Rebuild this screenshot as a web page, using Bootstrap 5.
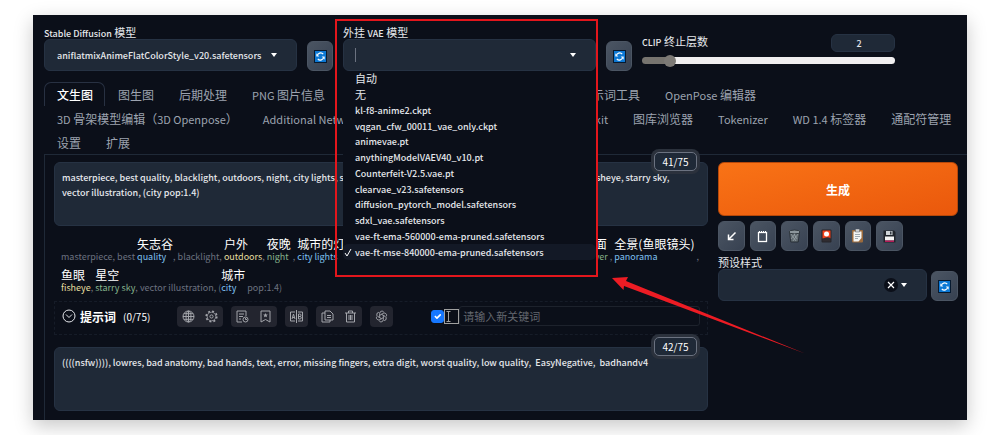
<!DOCTYPE html>
<html lang="zh-CN" data-bs-theme="dark">
<head>
<meta charset="utf-8">
<meta name="viewport" content="width=device-width, initial-scale=1">
<title>Stable Diffusion</title>
<link href="https://cdn.jsdelivr.net/npm/bootstrap@5.3.0/dist/css/bootstrap.min.css" rel="stylesheet">
<script src="https://cdn.jsdelivr.net/npm/bootstrap@5.3.0/dist/js/bootstrap.bundle.min.js" defer></script>
<style>
  body { background: #fff; color: #e5e7eb; font-family: "Noto Sans CJK SC", sans-serif; font-size: 11px; line-height: 15px; padding: 15px 33px; }
  .app { background: #0b0f19; padding: 10px 0 0 11px; box-shadow: 0 6px 18px rgba(0,0,0,.22); overflow: hidden; }
  .field { background-color: #1f2937; border: 1px solid #263243; border-radius: 6px; color: #e5e7eb; font-size: 9px; font-weight: 500; line-height: 15px; }
  .form-select.field { height: 32px; padding: 0 12px;
    background-image: url("data:image/svg+xml,%3Csvg xmlns='http://www.w3.org/2000/svg' viewBox='0 0 6 4'%3E%3Cpath d='M0 0h6L3 4z' fill='%23fff'/%3E%3C/svg%3E");
    background-size: 6px 4px; background-position: right 19px center; background-repeat: no-repeat; }
  .top-grid { display: grid; grid-template-columns: minmax(0,1fr) 26px minmax(0,1fr) 26px minmax(0,1fr); column-gap: 10px; padding-right: 72px; align-items: end; }
  .lbl { display: block; height: 14px; line-height: 14px; font-size: 11px; color: #e5e7eb; white-space: nowrap; margin: 0; }
  .lbl span { font-size: 9px; font-weight: 500; }
  .tool-btn { display: flex; align-items: center; justify-content: center; height: 30px; padding: 0; border: 1px solid #4b5563; border-radius: 6px; background: linear-gradient(135deg,#4b5563,#374151); color: #fff; }
  .preset-refresh { width: 27px; }
  .vae-slot { position: relative; }
  .vae-caret { position: absolute; left: 12px; top: 23px; width: 1px; height: 14px; background: #6b7280; }
  .vae-frame { position: absolute; z-index: 5; top: -6px; left: -8px; right: -2px; height: 258px; border: 2px solid #e3161c; pointer-events: none; }
  .vae-menu { position: absolute; z-index: 4; top: 46px; left: 0; right: 0; height: 189px; display: grid; grid-auto-rows: 1fr; margin: 0; padding: 0; list-style: none; background: #0b0f19; font-size: 9px; font-weight: 500; }
  .vae-menu li { display: flex; align-items: center; padding-left: 12px; position: relative; white-space: nowrap; }
  .vae-menu .zh { font-size: 11px; font-weight: 400; }
  .vae-menu .picked { background: #131926; border-radius: 5px; }
  .picked svg { position: absolute; left: 1px; }
  .pointer { position: absolute; z-index: 6; left: 100%; top: 252px; margin-left: 16px; pointer-events: none; }
  .num { width: 64px; height: 18px; text-align: center; padding: 0 8px 0 0; }
  .clip-range { display: block; appearance: none; width: 100%; height: 7px; margin: 5px 0 7px; border-radius: 4px; background: linear-gradient(90deg,#77746f 0 10%,#f1eff0 10%); }
  .clip-range::-webkit-slider-thumb { appearance: none; width: 12px; height: 12px; border-radius: 50%; background: #7d7a76; }
  .tabs { margin-top: 11px; font-size: 12px; }
  .tabs button { height: 24px; padding: 0 11px 0 12px; border: 1px solid transparent; border-bottom: 0; background: none; color: #9ca3af; line-height: 24px; white-space: nowrap; font-size: 12px; }
  .tabs button span { font-size: 11px; }
  .tabs button.active { color: #fff; border-color: #283142; border-radius: 7px 7px 0 0; font-weight: 500; }
  .tabs .skip-a { margin-left: 230px; }
  .tabs .skip-b { margin-left: 146px; }
  .panel { display: grid; grid-template-columns: minmax(0,654fr) minmax(0,240fr); column-gap: 10px; border: 1px solid #1f2937; border-width: 1px 0 0 1px; padding: 7px 9px 9px 9px; }
  .prompt { display: block; width: 100%; height: 64px; resize: none; padding: 7px; white-space: pre; overflow: hidden; }
  .prompt-box { position: relative; }
  .count { position: absolute; right: 11px; top: -10px; z-index: 2; min-width: 43px; height: 19px; border: 1px solid #6b7280; border-radius: 5px; background: #1f2937; box-shadow: 0 0 0 3px #2b313c; text-align: center; line-height: 17px; font-size: 10px; color: #fff; }
  .count.neg { top: -6px; }
  .glossed { padding: 6px 7px 0 7px; font-size: 9px; color: #6b7280; }
  .gloss-line { display: flex; height: 31px; align-items: flex-end; white-space: pre; line-height: 13px; }
  .gl { display: inline-flex; flex-direction: column; }
  .gl b { font-size: 12px; line-height: 13px; font-weight: 400; color: #fff; }
  .blue { color: #7ec0f0; } .yel { color: #e6dfa0; } .grn { color: #86b38b; }
  .keybar { margin-top: 7px; height: 34px; border: 1px dashed #161c28; padding: 0 7px 4px; display: flex; align-items: center; }
  .key-title { font-size: 12px; font-weight: 700; color: #fff; }
  .key-count { font-size: 10px; color: #fff; margin: 0 27px 0 7px; }
  .tools { display: flex; height: 21px; border-radius: 4px; background: #23252f; }
  .tools button { width: 23px; padding: 0; border: 0; background: none; color: #a3a5ab; display: flex; align-items: center; justify-content: center; }
  .tools svg, .chev { fill: none; stroke: currentColor; stroke-width: 1; }
  .form-check-input.key-check { width: 13px; height: 13px; margin: 0 0 0 38px; border-radius: 3px; flex: none; }
  .form-check-input.key-check:checked { background-color: #1677ff; border-color: #1677ff; }
  .key-input { flex: 1; min-width: 0; height: 20px; margin: 0; padding: 0 3px; border: 1px solid #1d222c; border-radius: 3px; background: transparent; font-size: 11px; color: #fff; }
  .key-input::placeholder { color: #63676f; }
  .generate { height: 54px; border: 1px solid #b6480a; border-radius: 6px; background: linear-gradient(to bottom right,#f97316,#ea580c); color: #fff; font-size: 12px; font-weight: 700; width: 100%; }
  .six { display: grid; grid-template-columns: repeat(6,minmax(0,1fr)); column-gap: 5px; max-width: 185px; margin-top: 5px; }
  .clear { position: absolute; right: 29px; top: 9px; width: 14px; height: 14px; border: 0; border-radius: 50%; background: #0b0f19; padding: 0; color: #fff; display: flex; align-items: center; justify-content: center; }
</style>
</head>
<body>
<svg width="0" height="0" class="position-absolute" aria-hidden="true">
  <symbol id="refresh" viewBox="0 0 13 13"><rect width="13" height="13" fill="#071a30"/><rect x="1" y="1" width="11" height="11" fill="#0c78d4"/><path d="M3.300 6a3.300 3.300 0 0 1 5.900-1.800M9.700 7a3.300 3.300 0 0 1-5.900 1.800" fill="none" stroke="#fff" stroke-width="1.200"/><path d="M2.300 3.300v3.300h3zM10.700 9.700V6.400h-3z" fill="#e9f4ff"/></symbol>
</svg>
<main class="app">
  <div class="top-grid">
    <div>
      <label class="lbl" for="model"><span>Stable Diffusion</span> 模型</label>
      <select id="model" class="form-select field"><option>aniflatmixAnimeFlatColorStyle_v20.safetensors</option></select>
    </div>
    <button class="tool-btn" aria-label="刷新模型"><svg width="13" height="13"><use href="#refresh"/></svg></button>
    <div class="vae-slot">
      <label class="lbl" for="vae">外挂 <span>VAE</span> 模型</label>
      <select id="vae" class="form-select field"><option></option></select>
      <i class="vae-caret"></i>
      <ul class="vae-menu">
        <li class="zh">自动</li><li class="zh">无</li><li>kl-f8-anime2.ckpt</li><li>vqgan_cfw_00011_vae_only.ckpt</li><li>animevae.pt</li><li>anythingModelVAEV40_v10.pt</li><li>Counterfeit-V2.5.vae.pt</li><li>clearvae_v23.safetensors</li><li>diffusion_pytorch_model.safetensors</li><li>sdxl_vae.safetensors</li><li>vae-ft-ema-560000-ema-pruned.safetensors</li>
        <li class="picked"><svg width="8" height="9" viewBox="0 0 8 9" fill="none" stroke="#fff"><path d="M1 5l2 3L7 1"/></svg>vae-ft-mse-840000-ema-pruned.safetensors</li>
      </ul>
      <div class="vae-frame"></div>
      <svg class="pointer" width="194" height="77" viewBox="612 277 194 77"><path d="M612 278l16-1-2 4L805 353.500 624 286l-.5 4z" fill="#ed1c24"/></svg>
    </div>
    <button class="tool-btn" aria-label="刷新 VAE"><svg width="13" height="13"><use href="#refresh"/></svg></button>
    <div>
      <div class="d-flex justify-content-between align-items-start"><label class="lbl" for="clip"><span>CLIP</span> 终止层数</label><input class="field num" value="2" aria-label="数值"></div>
      <input id="clip" class="clip-range" type="range" min="1" max="12" value="2">
    </div>
  </div>

  <nav class="tabs">
    <div class="d-flex"><button class="active">文生图</button><button>图生图</button><button>后期处理</button><button><span>PNG </span>图片信息</button><button class="skip-a">提示词工具</button><button><span>OpenPose </span>编辑器</button></div>
    <div class="d-flex"><button><span>3D </span>骨架模型编辑（<span>3D Openpose</span>）</button><button><span>Additional Networks</span></button><button class="skip-b"><span>Model Toolkit</span></button><button>图库浏览器</button><button><span>Tokenizer</span></button><button><span>WD 1.4 </span>标签器</button><button>通配符管理</button></div>
    <div class="d-flex"><button>设置</button><button>扩展</button></div>
  </nav>

  <section class="panel">
    <div>
      <div class="prompt-box"><span class="count">41/75</span>
<textarea class="field prompt" aria-label="提示词">masterpiece, best quality, blacklight, outdoors, night, city lights, sign, night market, upper body, portrait, cover, panorama, fisheye, starry sky,
vector illustration, (city pop:1.4)</textarea></div>
      <div class="glossed">
        <div class="gloss-line"><span>masterpiece, best </span><span class="gl blue"><b>矢志谷</b>quality</span><span>, blacklight, </span><span class="gl yel"><b>户外</b>outdoors</span><span>, </span><span class="gl grn"><b>夜晚</b>night</span><span> , </span><span class="gl blue"><b>城市的灯光</b>city lights</span><span class="ms-auto"></span><span class="gl grn"><b>封面</b> cover</span><span> , </span><span class="gl blue"><b>全景(鱼眼镜头)</b>panorama</span><span> , </span></div>
        <div class="gloss-line"><span class="gl yel"><b>鱼眼</b>fisheye</span><span>, </span><span class="gl grn"><b>星空</b>starry sky</span><span>, vector illustration, (</span><span class="gl blue"><b>城市</b>city</span><span> pop:1.4)</span></div>
      </div>
      <div class="keybar">
        <svg class="chev me-1" width="14" height="14" viewBox="0 0 14 14"><circle cx="7" cy="7" r="6"/><path d="M4 5.500l3 3 3-3"/></svg>
        <span class="key-title">提示词</span><span class="key-count">(0/75)</span>
        <div class="tools">
          <button aria-label="语言"><svg width="13" height="13" viewBox="0 0 13 13"><circle cx="6.500" cy="6.500" r="5.500"/><ellipse cx="6.500" cy="6.500" rx="2.500" ry="5.500"/><path d="M1 6.500h11M6.500 1v11M2 3.700h9M2 9.300h9"/></svg></button>
          <button aria-label="设置"><svg width="13" height="13" viewBox="0 0 13 13"><circle cx="6.500" cy="6.500" r="5.300" stroke-width="1.600" stroke-dasharray="2 2.160"/><circle cx="6.500" cy="6.500" r="4.300" stroke-width=".8"/><circle cx="6.500" cy="6.500" r="1.600"/></svg></button>
        </div>
        <div class="tools ms-2">
          <button aria-label="历史"><svg width="13" height="13" viewBox="0 0 13 13"><path d="M10 6V1H1v11h5M3 4h5M3 6.500h4M3 9h2"/><circle cx="9.500" cy="9.500" r="2.500"/><path d="M9.500 8v1.500H11"/></svg></button>
          <button aria-label="收藏"><svg width="13" height="13" viewBox="0 0 13 13"><path d="M2 1h9v11L6.500 9.500 2 12z"/><path d="M6.500 3l.7 1.500 1.600.1-1.200 1.100.4 1.600-1.500-.9-1.500.9.400-1.600L4.200 4.600l1.600-.1z" fill="currentColor" stroke="none"/></svg></button>
        </div>
        <div class="tools ms-2">
          <button aria-label="翻译"><svg width="13" height="13" viewBox="0 0 13 13"><path d="M5 2H.5v9H5M8 2h4.500v9H8M6.500 0v13M2 9l1.500-5L5 9M2.500 7.500h2M8.500 4v5h1.500a1.200 1.200 0 0 0 0-2.500H8.500h1.300a1.200 1.200 0 0 0 0-2.500z"/></svg></button>
        </div>
        <div class="tools ms-2">
          <button aria-label="复制"><svg width="13" height="13" viewBox="0 0 13 13"><path d="M4 1h5l3 3v6H4zM4 3H1v9h8v-2M6 5.500h4M6 7.500h4"/></svg></button>
          <button aria-label="删除"><svg width="13" height="13" viewBox="0 0 13 13"><path d="M1 3h11M4.500 3V1h4v2M2.500 3v9h8V3M5 5v5M6.500 5v5M8 5v5"/></svg></button>
        </div>
        <div class="tools ms-2">
          <button aria-label="ChatGPT"><svg width="13" height="13" viewBox="0 0 24 24" stroke-width="1.600"><g id="petal"><path d="M8.500 14V6.500a4.300 4.300 0 0 1 7.800-2.500M8.500 10l6.700-3.900a4.300 4.300 0 0 1 6 5.400"/></g><use href="#petal" transform="rotate(60 12 12)"/><use href="#petal" transform="rotate(120 12 12)"/><use href="#petal" transform="rotate(180 12 12)"/><use href="#petal" transform="rotate(240 12 12)"/><use href="#petal" transform="rotate(300 12 12)"/></svg></button>
        </div>
        <input class="form-check-input key-check" type="checkbox" checked aria-label="启用">
        <svg class="flex-shrink-0" width="15" height="15" viewBox="0 0 15 15" fill="none" stroke="#a0a0a0"><rect x=".5" y=".5" width="14" height="14"/><path d="M2.500 2.500h4M4.500 2.500v10M2.500 12.500h4"/></svg>
        <input class="key-input" placeholder="请输入新关键词" aria-label="新关键词">
      </div>
      <div class="prompt-box mt-2 pt-1"><span class="count neg">42/75</span>
<textarea class="field prompt" aria-label="反向提示词">((((nsfw)))), lowres, bad anatomy, bad hands, text, error, missing fingers, extra digit, worst quality, low quality,  EasyNegative,  badhandv4</textarea></div>
    </div>
    <div>
      <button class="generate">生成</button>
      <div class="six">
        <button class="tool-btn" aria-label="读取"><svg width="13" height="13" viewBox="0 0 13 13" stroke="#fff" stroke-width="1.500" fill="none"><path d="M10.500 2.500L4 9M3.500 4.500V9.500H8.500"/></svg></button>
        <button class="tool-btn" aria-label="清空"><svg width="13" height="13" viewBox="0 0 13 13" stroke="#fff" fill="none"><rect x="2.500" y="2.500" width="8" height="9" stroke-width="1.300"/><path d="M3 1.500h8" stroke-dasharray="1 1"/></svg></button>
        <button class="tool-btn" aria-label="删除"><svg width="13" height="14" viewBox="0 0 13 14"><path d="M1.500 3h10l-1.300 10H2.800z" fill="#606a70" stroke="#1c2228" stroke-width=".7"/><ellipse cx="6.500" cy="3" rx="5.500" ry="1.900" fill="#8d979c" stroke="#20272c" stroke-width=".8"/><path d="M3 5l5 7M6 5l3 5M10 5l-5 7M7 5l-4 5" stroke="#a8b2b6" stroke-width=".6"/></svg></button>
        <button class="tool-btn" aria-label="附加网络"><svg width="13" height="14" viewBox="0 0 13 14"><rect x="1.500" y=".5" width="10" height="13" rx="1" fill="#25252a"/><path d="M2.500 1.500h8v8h-8z" fill="#f4431c"/><circle cx="6.500" cy="5" r="2.500" fill="#fff"/><path d="M2.500 10q4-3 8-1v3.500h-8z" fill="#302c30"/></svg></button>
        <button class="tool-btn" aria-label="粘贴样式"><svg width="13" height="14" viewBox="0 0 13 14"><rect x="1" y="1" width="11" height="12.500" rx="1" fill="#9c6b3d"/><path d="M2.500 2.500h8V9l-3 3.500h-5z" fill="#f5f5f3"/><path d="M4.500 0h4v3h-4z" fill="#d2d5d8" stroke="#545b63" stroke-width=".5"/><path d="M4 5.500h5M4 7.500h5M4 9.500h3" stroke="#8995a0" stroke-width=".8"/></svg></button>
        <button class="tool-btn" aria-label="保存"><svg width="13" height="13" viewBox="0 0 13 13"><path d="M.5.5H11L12.500 2v10.500H.5z" fill="#20242b"/><path d="M3 1h6.500v4H3z" fill="#cfd4d8"/><path d="M7 1.500h1.500v3H7z" fill="#343a42"/><path d="M2 6.500h9v4H2z" fill="#f3f3f3"/><path d="M2 10.500h9V12H2z" fill="#b31957"/></svg></button>
      </div>
      <label class="lbl mt-1" for="preset">预设样式</label>
      <div class="d-flex align-items-end gap-1">
        <div class="flex-fill position-relative"><select id="preset" class="form-select field"><option></option></select><button class="clear" aria-label="清除"><svg width="8" height="8" viewBox="0 0 8 8" stroke="#fff" stroke-width="1.200"><path d="M1 1l6 6M7 1L1 7"/></svg></button></div>
        <button class="tool-btn preset-refresh" aria-label="刷新样式"><svg width="13" height="13"><use href="#refresh"/></svg></button>
      </div>
    </div>
  </section>
</main>
</body>
</html>
